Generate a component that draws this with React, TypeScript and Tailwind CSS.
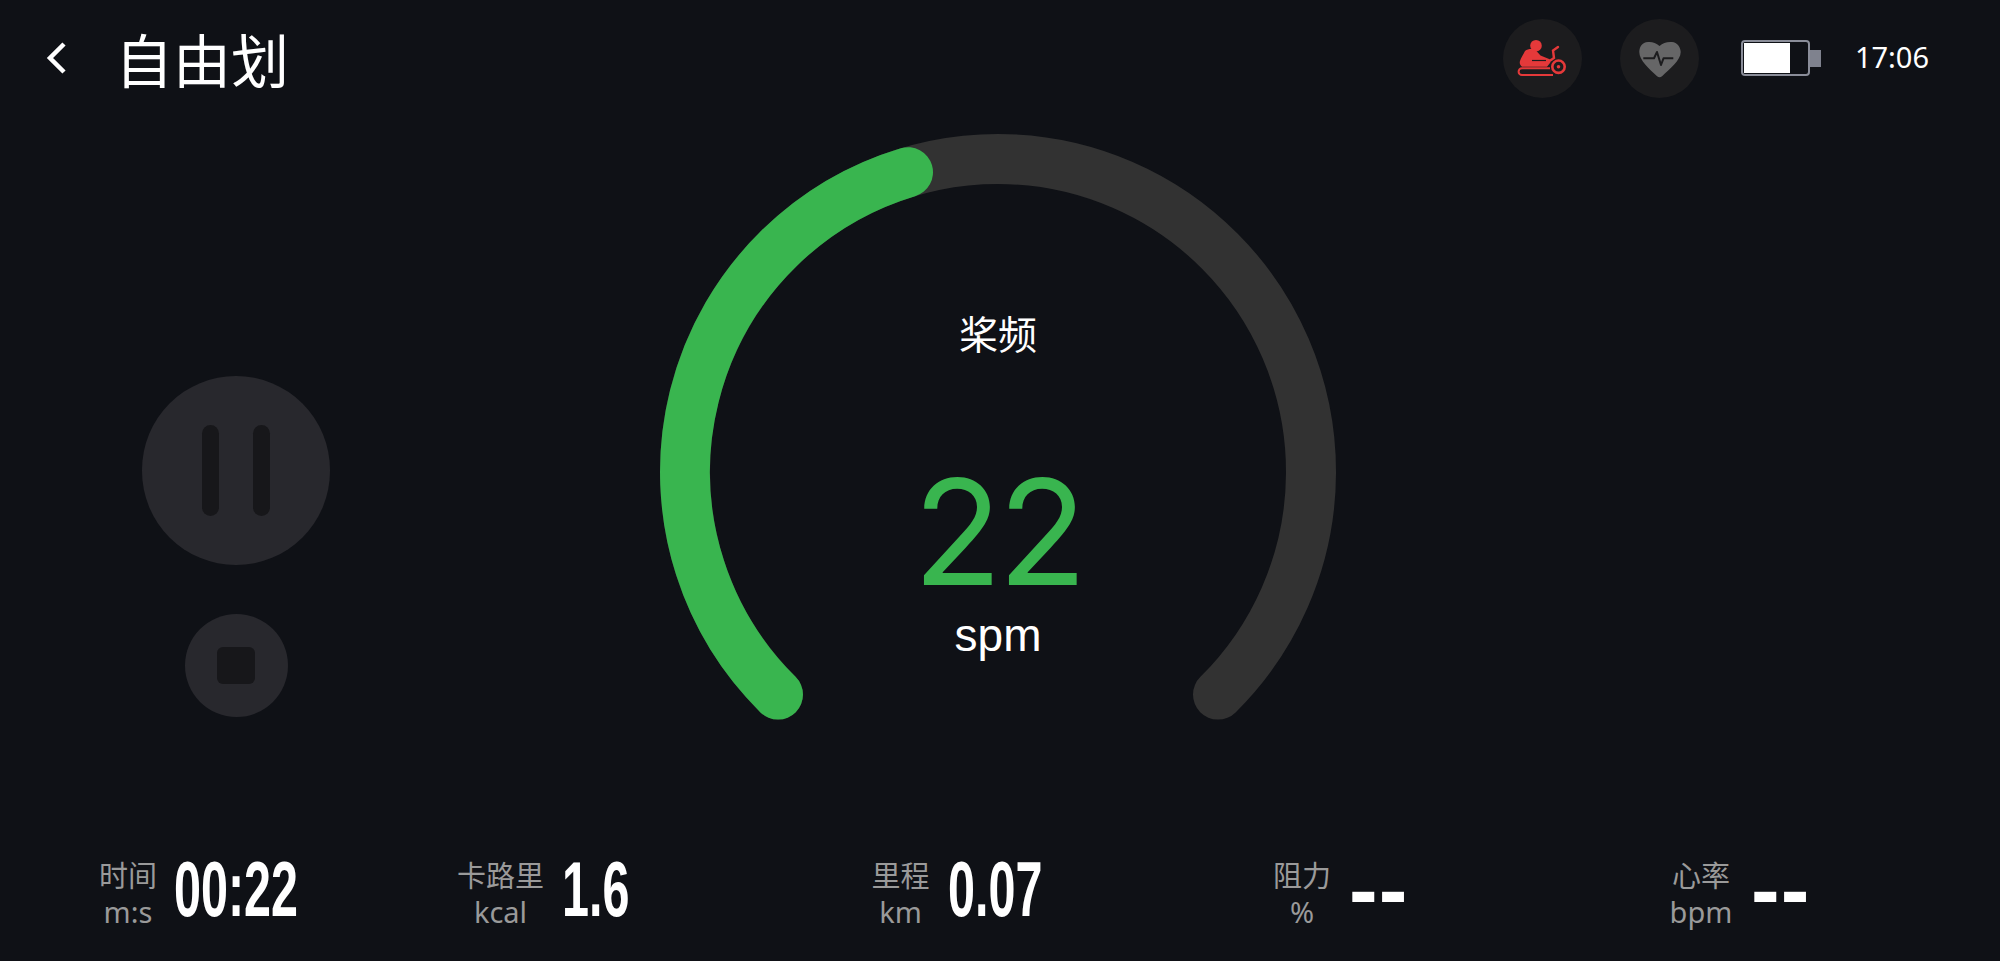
const cjk = "font-['Noto_Sans_CJK_SC',sans-serif]";
const digits = "origin-left scale-x-[0.63] text-[77px] font-['Liberation_Sans_Narrow',sans-serif]";
const dashes = "tracking-[1px] text-[86px] font-['Liberation_Sans',sans-serif]";

const stats = [
  { label: "时间", unit: "m:s", value: "00:22", labelW: "w-[56px]", valueW: "w-[122px]", offset: "ml-[100px]", face: digits },
  { label: "卡路里", unit: "kcal", value: "1.6", labelW: "w-[87px]", valueW: "w-[66px]", offset: "ml-[161px]", face: digits },
  { label: "里程", unit: "km", value: "0.07", labelW: "w-[59px]", valueW: "w-[93px]", offset: "ml-[243px]", face: digits },
  { label: "阻力", unit: "%", value: "--", labelW: "w-[58px]", valueW: "w-[54px]", offset: "ml-[232px]", face: dashes },
  { label: "心率", unit: "bpm", value: "--", labelW: "w-[64px]", valueW: "w-[54px]", offset: "ml-[266px]", face: dashes },
];

function RowerIcon() {
  return (
    <svg viewBox="0 0 78 78" className="h-[78px] w-[78px]" fill="none" aria-hidden>
      <circle cx="33" cy="26.700" r="5.800" fill="#e5393a" />
      <path
        d="M22 32c3-2.500 8-2.500 10.500-1l5 5.500 11 4.500-1.500 3-3 3.700H19c-2-1.500-2.700-3.500-2-5.700 1-3.500 3.500-6.500 5-10z"
        fill="#e5393a"
      />
      <path d="M29 41.500h14" stroke="#1c1c1e" strokeWidth="1.200" />
      <path d="M48 41l3-2-1-7.500 5-3.500" stroke="#e5393a" strokeWidth="2.400" strokeLinecap="round" />
      <circle cx="55.500" cy="47.700" r="6.200" stroke="#e5393a" strokeWidth="2.600" fill="#1c1c1e" />
      <circle cx="55.500" cy="47.700" r="1.800" fill="#e5393a" />
      <path d="M47 49.300H19a3.400 3.400 0 0 0 0 6.800h31" stroke="#e5393a" strokeWidth="2" />
    </svg>
  );
}

function HeartIcon() {
  return (
    <svg viewBox="0 0 78 78" className="h-[78px] w-[78px]" fill="none" aria-hidden>
      <path
        d="M39.500 27C36 23.500 32 22.700 28 23c-6 .5-8.700 5-8.700 10 0 8.500 10 17 17.500 24 2 1.800 3.500 1.800 5.500 0C49.500 50 60.700 41.500 60.700 33c0-5-3.700-9.500-8.700-10-5-.3-9 .5-12.500 4z"
        fill="#666667"
      />
      <path d="M23.300 39.300H34l3-6.300 4 13 2.500-6.700h9.800" stroke="#1c1c1e" strokeWidth="2" strokeLinejoin="round" />
    </svg>
  );
}

function Battery() {
  return (
    <div className="flex items-center">
      <div className="flex h-[36px] w-[69px] rounded-[4px] border-[2px] border-[#8a8d99] p-[1px]">
        <div className="h-full w-[46px] bg-white" />
      </div>
      <div className="h-[17px] w-[11px] bg-[#7f828e]" />
    </div>
  );
}

function Gauge() {
  return (
    <div className="relative ml-[318px] mt-[9px] h-[620px] w-[700px]">
      <svg viewBox="0 0 700 620" className="h-full w-full" fill="none" aria-hidden>
        <path
          d="M130 569.600A313 313 0 1 1 570 569.600"
          stroke="#323232"
          strokeWidth="50"
          strokeLinecap="round"
        />
        <path
          d="M130 569.600A313 313 0 0 1 260 47.200"
          stroke="#39b54f"
          strokeWidth="50"
          strokeLinecap="round"
        />
      </svg>
      <div className="absolute inset-0 flex flex-col items-center">
        <div className={`${cjk} mt-[179px] text-[39px] leading-[56px] text-white`}>桨频</div>
        <div className="mt-[107px] font-['Inter',sans-serif] text-[146px] font-normal leading-[130px] tracking-[-4px] text-[#39b54f]">22</div>
        <div className="mt-[8px] font-['Liberation_Sans',sans-serif] text-[46px] leading-[60px] text-white">spm</div>
      </div>
    </div>
  );
}

export default function App() {
  return (
    <div className="flex h-[961px] w-[2000px] flex-col overflow-hidden bg-[#0f1116]">
      <header className="flex h-[116px] items-center">
        <svg viewBox="0 0 24 34" className="ml-[45px] h-[34px] w-[24px]" fill="none" aria-hidden>
          <path d="M19 3L5 17l14 14" stroke="#fff" strokeWidth="4.500" />
        </svg>
        <h1 className={`${cjk} ml-[46px] text-[58px] font-normal leading-[80px] text-white`}>自由划</h1>
        <div className="ml-auto flex items-center">
          <div className="flex h-[79px] w-[79px] items-center justify-center rounded-full bg-[#1c1c1e]">
            <RowerIcon />
          </div>
          <div className="ml-[38px] flex h-[79px] w-[79px] items-center justify-center rounded-full bg-[#1c1c1e]">
            <HeartIcon />
          </div>
          <div className="ml-[42px]">
            <Battery />
          </div>
          <div className="ml-[34px] mb-[2px] mr-[71px] font-['Noto_Sans',sans-serif] text-[29px] leading-[40px] text-white">17:06</div>
        </div>
      </header>

      <main className="flex flex-1">
        <div className="ml-[142px] mt-[260px] flex w-[188px] flex-col items-center">
          <div className="flex h-[189px] w-[188px] items-center justify-center gap-[34px] rounded-full bg-[#28282d]">
            <div className="h-[91px] w-[17px] rounded-full bg-[#17171a]" />
            <div className="h-[91px] w-[17px] rounded-full bg-[#17171a]" />
          </div>
          <div className="mt-[49px] flex h-[103px] w-[103px] items-center justify-center rounded-full bg-[#28282d]">
            <div className="h-[37px] w-[38px] rounded-[6px] bg-[#17171a]" />
          </div>
        </div>
        <Gauge />
      </main>

      <footer className="flex pb-[25px]">
        {stats.map((s) => (
          <div key={s.label} className={`flex items-center ${s.offset}`}>
            <div className={`flex flex-col items-center ${s.labelW} ${cjk} text-[29px] leading-[38px] text-[#9a9a9a]`}>
              <span className="whitespace-nowrap">{s.label}</span>
              <span className="whitespace-nowrap font-['Noto_Sans',sans-serif] text-[29px]">{s.unit}</span>
            </div>
            <div className={`ml-[18px] mb-[8px] ${s.valueW} ${s.face} whitespace-nowrap font-bold leading-[78px] text-white`}>
              {s.value}
            </div>
          </div>
        ))}
      </footer>
    </div>
  );
}
